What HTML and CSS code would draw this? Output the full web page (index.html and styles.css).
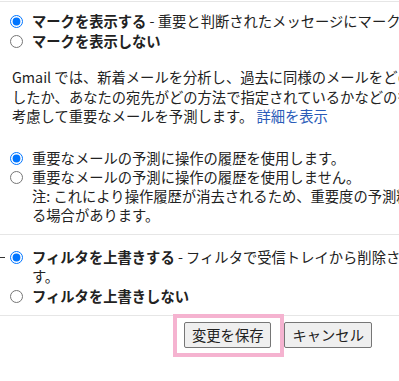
FILE: index.html
```html
<!DOCTYPE html>
<html lang="ja">
<head>
    <meta charset="UTF-8">
    <title>重要マーク</title>
    <link rel="stylesheet" href="styles.css">
</head>
<body>
    <div class="settings">
        <div class="section first">
            <label class="option">
                <input type="radio" name="mark" checked>
                <span class="text"><b>マークを表示する</b> - 重要と判断されたメッセージにマークを付けます。</span>
            </label>
            <label class="option">
                <input type="radio" name="mark">
                <span class="text"><b>マークを表示しない</b></span>
            </label>
            <p class="desc">
                Gmail では、新着メールを分析し、過去に同様のメールをどのように処理<br>
                したか、あなたの宛先がどの方法で指定されているかなどの多くのシグナルを<br>
                考慮して重要なメールを予測します。 <a href="#">詳細を表示</a>
            </p>
            <div class="history">
                <label class="option">
                    <input type="radio" name="history" checked>
                    <span class="text">重要なメールの予測に操作の履歴を使用します。</span>
                </label>
                <label class="option">
                    <input type="radio" name="history">
                    <span class="text">重要なメールの予測に操作の履歴を使用しません。<br>
                    注: これにより操作履歴が消去されるため、重要度の予測精度が低下す<br>
                    る場合があります。</span>
                </label>
            </div>
        </div>

        <div class="section filters">
            <label class="option">
                <span class="dash"></span>
                <input type="radio" name="filter" checked>
                <span class="text"><b>フィルタを上書きする</b> - フィルタで受信トレイから削除されるはずの重要なメールを表示しま<br>す。</span>
            </label>
            <label class="option">
                <input type="radio" name="filter">
                <span class="text"><b>フィルタを上書きしない</b></span>
            </label>
        </div>

        <div class="actions">
            <span class="highlight"><button type="button">変更を保存</button></span>
            <button type="button">キャンセル</button>
        </div>
    </div>
</body>
</html>
```

FILE: styles.css
```css
html {
    overflow: hidden;
    background: #fff;
}
body {
    margin: 0;
    padding: 0 0 30px;
    font-family: "Noto Sans CJK JP", "Liberation Sans", sans-serif;
    font-size: 14.3px;
    color: #222;
}
.settings {
    width: 720px;
}
.section {
    border-top: 1px solid #e6e6e6;
}
.first {
    margin-top: 1px;
    padding-top: 9px;
    padding-bottom: 10px;
}
.option {
    display: flex;
    align-items: flex-start;
    padding-left: 10px;
    line-height: 20px;
    white-space: nowrap;
}
.option input {
    margin: 4px 9px 0 0;
    width: 13px;
    height: 13px;
    flex: none;
}
.option b {
    font-weight: bold;
}
.desc {
    margin: 16px 0 0 12px;
    line-height: 19.5px;
    white-space: nowrap;
}
.desc a {
    color: #2a5bb8;
    text-decoration: none;
}
.history {
    margin-top: 22px;
}
.history .option {
    line-height: 19px;
}
.filters {
    padding-top: 12px;
    padding-bottom: 10px;
}
.filters .option {
    line-height: 19.5px;
}
.dash {
    width: 5px;
    height: 1px;
    background: #333;
    margin: 10px 5px 0 -10px;
    flex: none;
}
.actions {
    border-top: 1px solid #e6e6e6;
    display: flex;
    align-items: flex-start;
    gap: 13px;
    padding: 6px 0 0 184px;
}
.highlight {
    position: relative;
    display: flex;
}
.highlight::after {
    content: "";
    position: absolute;
    top: -8px;
    left: -11px;
    right: -13px;
    bottom: -9px;
    border: 4px solid #f5b3d0;
    pointer-events: none;
}
button {
    font-family: "Noto Sans CJK JP", sans-serif;
    font-size: 14.3px;
    color: #222;
    background: #efefef;
    border: 1px solid #767676;
    border-radius: 2px;
    height: 26px;
    padding: 0 7px;
    line-height: 22px;
}
```
